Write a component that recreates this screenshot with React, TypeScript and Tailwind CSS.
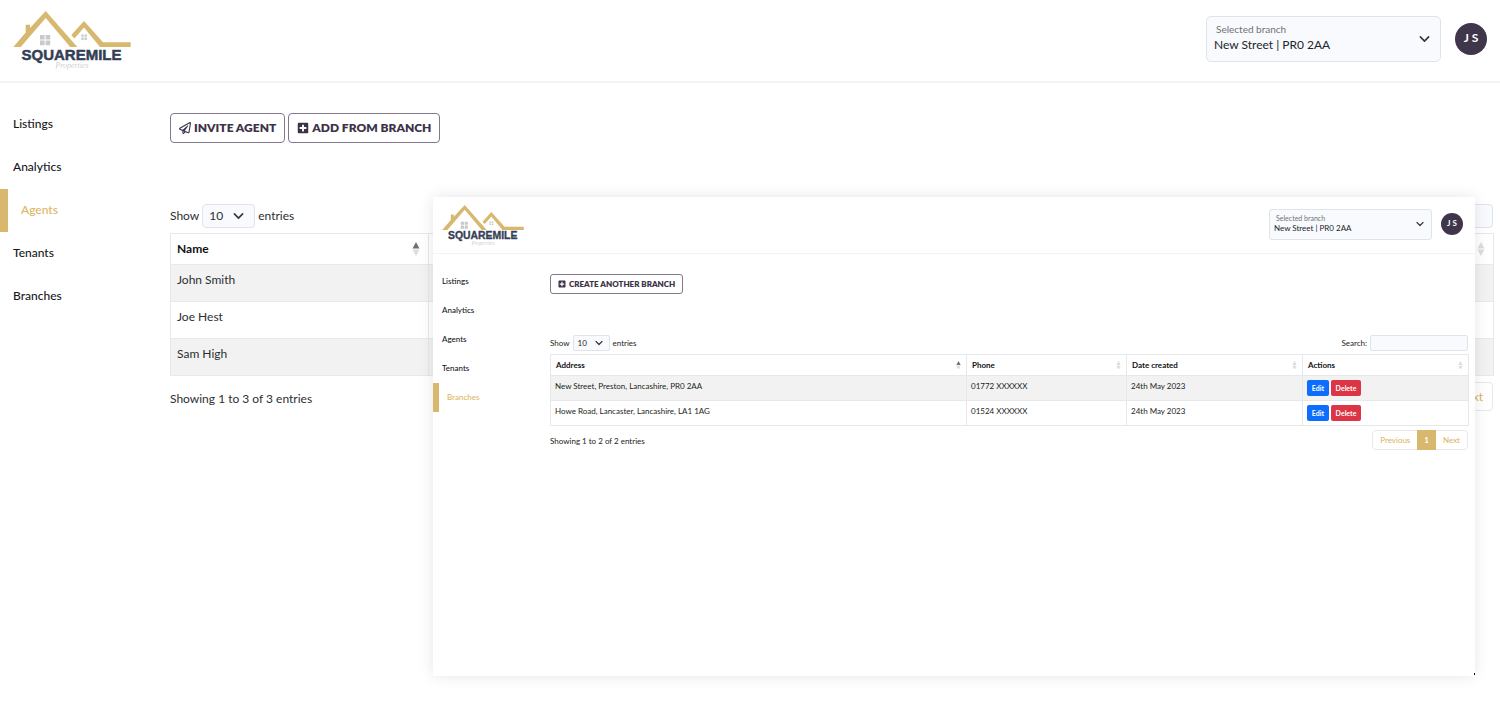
import type { ReactNode } from 'react';
import { FaPlusSquare, FaRegPaperPlane } from 'react-icons/fa';

type Size = 'lg' | 'sm';

interface Column {
  label: string;
  className: string;
  sorted?: boolean;
}

interface Branch {
  address: string;
  phone: string;
  created: string;
}

const NAV = ['Listings', 'Analytics', 'Agents', 'Tenants', 'Branches'];

const AGENTS = ['John Smith', 'Joe Hest', 'Sam High'];

const BRANCHES: Branch[] = [
  { address: 'New Street, Preston, Lancashire, PR0 2AA', phone: '01772 XXXXXX', created: '24th May 2023' },
  { address: 'Howe Road, Lancaster, Lancashire, LA1 1AG', phone: '01524 XXXXXX', created: '24th May 2023' },
];

const AGENT_COLUMNS: Column[] = [
  { label: 'Name', className: 'w-[258px]', sorted: true },
  { label: '', className: '' },
];

const BRANCH_COLUMNS: Column[] = [
  { label: 'Address', className: '', sorted: true },
  { label: 'Phone', className: 'w-[160px]' },
  { label: 'Date created', className: 'w-[176px]' },
  { label: 'Actions', className: 'w-[166px]' },
];

const STYLES = {
  lg: {
    text: 'text-[12px] leading-[18px]',
    header: 'h-[83px] border-b-2 pl-[13px] pr-[13px] pb-1',
    logoLink: 'pt-1',
    logo: 'w-[118px]',
    branchBox: 'w-[235px] h-[46px] rounded-[5px] pt-[5px]',
    branchLabel: 'pl-[9px] text-[10px] leading-[15px]',
    branchSelect: 'pl-[7px] text-[12px] leading-[16px]',
    branchChevron: 'right-[10px] w-[11px]',
    avatar: 'w-8 h-8 text-[12px] ml-[14px] pb-[2px]',
    nav: 'w-[170px] pt-5',
    navItem: 'h-[43px] pl-[13px] pb-[2px]',
    navActive: 'h-[43px] pl-[13px] pb-[2px] border-l-8',
    main: 'pt-[30px] pr-[6px]',
    button: 'h-[30px] rounded-[4px] px-[8px] gap-[3px] text-[12px]',
    actions: 'gap-[3px] mb-[61px]',
    controls: 'gap-[3px] h-6 mb-[5px] pr-[1px]',
    lengthSelect: 'w-[53px] h-6 pl-[6px] rounded-[4px]',
    lengthChevron: 'right-[11px] w-[11px]',
    search: 'w-[146px] h-6 rounded-[4px]',
    headCell: 'h-[31px] pl-[6px] pr-[8px]',
    cell: 'h-[37px] px-[6px] pt-[6px]',
    sort: 'w-[8px]',
    footer: 'mt-[6px] pr-[1px]',
    info: 'pt-1',
    page: 'h-[27px] px-[9px]',
  },
  sm: {
    text: 'text-[8px] leading-[12px]',
    header: 'h-[57px] border-b pl-[9px] pr-[12px] pb-[2px]',
    logoLink: 'pt-1',
    logo: 'w-[82px]',
    branchBox: 'w-[163px] h-[31px] rounded-[3px] pt-[3px]',
    branchLabel: 'pl-[6px] text-[7px] leading-[10px]',
    branchSelect: 'pl-[4px] text-[8px] leading-[11px]',
    branchChevron: 'right-[7px] w-[8px]',
    avatar: 'w-[22px] h-[22px] text-[8px] ml-[9px] pb-[2px]',
    nav: 'w-[117px] pt-[13px]',
    navItem: 'h-[29px] pl-[9px] pb-[2px]',
    navActive: 'h-[29px] pl-[8px] pb-[2px] border-l-6',
    main: 'pt-5 pr-[6px]',
    button: 'h-5 rounded-[3px] px-[7px] gap-[3px] text-[8px]',
    actions: 'gap-[3px] mb-[41px]',
    controls: 'gap-[3px] h-4 mb-[3px] pr-[1px]',
    lengthSelect: 'w-[37px] h-4 pl-[4px] rounded-[2px]',
    lengthChevron: 'right-[7px] w-[8px]',
    search: 'w-[98px] h-4 rounded-[2px]',
    headCell: 'h-[21px] px-[5px]',
    cell: 'h-[25px] px-[4px] pt-[4px]',
    sort: 'w-[5px]',
    footer: 'mt-[4px] pr-[1px]',
    info: 'pt-[2px]',
    page: 'h-[18px] px-[7px]',
  },
};

function Logo({ className }: { className: string }) {
  return (
    <svg viewBox="0 0 118 60" className={className} role="img" aria-label="Squaremile Properties">
      <g fill="#d8b86e">
        <path d="M0.3 36 L12.7 21.6 V13.7 H17 V17 L32.7 0 L64.3 36 H57.2 L32.7 7 L7.7 36 Z" />
        <path d="M58.3 24 L71 10 L90 31.3 H117.7 V36 H87 L71 16.4 L61.4 27.4 Z" />
      </g>
      <g fill="#c9c9cc">
        <path d="M27 24h4.6v4.6H27zM32.6 24h4.6v4.6h-4.6zM27 29.6h4.6v4.6H27zM32.6 29.6h4.6v4.6h-4.6z" />
        <path d="M68.4 23.4h2.3v2.3h-2.3zM71.6 23.4h2.3v2.3h-2.3zM68.4 26.6h2.3v2.3h-2.3zM71.6 26.6h2.3v2.3h-2.3z" />
      </g>
      <text
        x="58.5"
        y="49"
        textAnchor="middle"
        className="font-['Liberation_Sans'] text-[15px] font-bold"
        fill="#343f57"
        stroke="#343f57"
        strokeWidth="0.5"
      >
        SQUAREMILE
      </text>
      <text x="59" y="57" textAnchor="middle" className="font-['Liberation_Serif'] text-[8px] italic" fill="#d0d0d4">
        Properties
      </text>
    </svg>
  );
}

function Chevron({ className }: { className: string }) {
  return (
    <svg
      viewBox="0 0 16 16"
      className={`absolute top-1/2 -translate-y-1/2 pointer-events-none ${className}`}
      fill="none"
      stroke="#343a40"
      strokeWidth="2.4"
      strokeLinecap="round"
      strokeLinejoin="round"
    >
      <path d="M2 5l6 6 6-6" />
    </svg>
  );
}

function SortIcon({ sorted, className }: { sorted?: boolean; className: string }) {
  return (
    <svg viewBox="0 0 8 14" className={`shrink-0 ${className}`}>
      <path d="M4 0L7.5 6.5H0.5Z" fill={sorted ? '#6f7173' : '#dcdddf'} />
      <path d="M4 14L7.5 7.5H0.5Z" fill="#dcdddf" />
    </svg>
  );
}

function OutlineButton({ size, icon, children }: { size: Size; icon: ReactNode; children: ReactNode }) {
  return (
    <button
      className={`flex items-center border border-[#81798b] bg-white font-extrabold text-[#3d3349] whitespace-nowrap ${STYLES[size].button}`}
    >
      {icon}
      {children}
    </button>
  );
}

function Header({ size }: { size: Size }) {
  const s = STYLES[size];
  return (
    <header className={`flex items-center border-[#f3f3f3] ${s.header}`}>
      <a href="#" className={`mr-auto ${s.logoLink}`}>
        <Logo className={s.logo} />
      </a>
      <div className={`relative border border-[#dfe3ea] bg-[#f8fafe] ${s.branchBox}`}>
        <label htmlFor={`branch-${size}`} className={`block text-[#6e7277] ${s.branchLabel}`}>
          Selected branch
        </label>
        <select
          id={`branch-${size}`}
          className={`block w-full appearance-none bg-transparent text-[#212529] ${s.branchSelect}`}
        >
          <option>New Street | PR0 2AA</option>
        </select>
        <Chevron className={s.branchChevron} />
      </div>
      <button
        className={`flex items-center justify-center rounded-full bg-[#40364b] font-bold text-white ${s.avatar}`}
      >
        J S
      </button>
    </header>
  );
}

function Sidebar({ size, active }: { size: Size; active: string }) {
  const s = STYLES[size];
  return (
    <nav className={`shrink-0 ${s.nav}`}>
      {NAV.map((item) => (
        <a
          key={item}
          href="#"
          className={`flex items-center font-medium ${
            item === active ? `border-[#d8b86e] text-[#dcb765] ${s.navActive}` : `text-[#16181b] ${s.navItem}`
          }`}
        >
          {item}
        </a>
      ))}
    </nav>
  );
}

function DataTable({
  size,
  columns,
  info,
  searchLabel,
  children,
}: {
  size: Size;
  columns: Column[];
  info: string;
  searchLabel?: string;
  children: ReactNode;
}) {
  const s = STYLES[size];
  return (
    <>
      <div className={`flex items-center ${s.controls}`}>
        <label htmlFor={`length-${size}`}>Show</label>
        <div className="relative">
          <select
            id={`length-${size}`}
            className={`block appearance-none border border-[#dfe3ea] bg-[#f8fafe] ${s.lengthSelect}`}
          >
            <option>10</option>
          </select>
          <Chevron className={s.lengthChevron} />
        </div>
        <span>entries</span>
        <label htmlFor={`search-${size}`} className="ml-auto">
          {searchLabel}
        </label>
        <input
          id={`search-${size}`}
          type="search"
          aria-label="Search"
          className={`border border-[#dfe3ea] bg-[#f8fafe] ${s.search}`}
        />
      </div>

      <table className="w-full table-fixed border-collapse border border-[#e6e8eb]">
        <thead>
          <tr>
            {columns.map((col, i) => (
              <th key={i} className={`border border-[#e6e8eb] text-left font-bold text-[#101214] ${s.headCell} ${col.className}`}>
                <div className="flex items-center justify-between">
                  <span>{col.label}</span>
                  <SortIcon sorted={col.sorted} className={s.sort} />
                </div>
              </th>
            ))}
          </tr>
        </thead>
        <tbody>{children}</tbody>
      </table>

      <div className={`flex items-center justify-between ${s.footer}`}>
        <p className={s.info}>{info}</p>
        <div className="flex rounded-[4px] border border-[#e6e8eb] text-[#d8b25c]">
          <button className={s.page}>Previous</button>
          <button className={`-my-px box-content border-y border-[#d8b86e] bg-[#d8b86e] font-bold text-white ${s.page}`}>1</button>
          <button className={s.page}>Next</button>
        </div>
      </div>
    </>
  );
}

function Cell({ size, children }: { size: Size; children?: ReactNode }) {
  return <td className={`border border-[#e6e8eb] align-top ${STYLES[size].cell}`}>{children}</td>;
}

function AgentsPage() {
  const s = STYLES.lg;
  return (
    <div className={`text-[#2b2f33] ${s.text}`}>
      <Header size="lg" />
      <div className="flex">
        <Sidebar size="lg" active="Agents" />
        <main className={`flex-1 ${s.main}`}>
          <div className={`flex ${s.actions}`}>
            <OutlineButton size="lg" icon={<FaRegPaperPlane />}>INVITE AGENT</OutlineButton>
            <OutlineButton size="lg" icon={<FaPlusSquare />}>ADD FROM BRANCH</OutlineButton>
          </div>
          <DataTable size="lg" columns={AGENT_COLUMNS} info="Showing 1 to 3 of 3 entries">
            {AGENTS.map((name) => (
              <tr key={name} className="odd:bg-[#f2f2f2]">
                <Cell size="lg">{name}</Cell>
                <Cell size="lg" />
              </tr>
            ))}
          </DataTable>
        </main>
      </div>
    </div>
  );
}

function BranchesWindow() {
  const s = STYLES.sm;
  return (
    <section
      className={`absolute top-[197px] left-[433px] right-[25px] h-[479px] bg-white text-[#1b1e21] shadow-[0_0_14px_rgba(0,0,0,0.1)] ${s.text}`}
    >
      <Header size="sm" />
      <div className="flex">
        <Sidebar size="sm" active="Branches" />
        <main className={`flex-1 ${s.main}`}>
          <div className={`flex ${s.actions}`}>
            <OutlineButton size="sm" icon={<FaPlusSquare />}>CREATE ANOTHER BRANCH</OutlineButton>
          </div>
          <DataTable size="sm" columns={BRANCH_COLUMNS} info="Showing 1 to 2 of 2 entries" searchLabel="Search:">
            {BRANCHES.map((branch) => (
              <tr key={branch.address} className="odd:bg-[#f2f2f2]">
                <Cell size="sm">{branch.address}</Cell>
                <Cell size="sm">{branch.phone}</Cell>
                <Cell size="sm">{branch.created}</Cell>
                <Cell size="sm">
                  <div className="flex gap-[2px] text-[7px] font-bold text-white">
                    <button className="h-4 w-[22px] rounded-[2px] bg-[#0d6efd]">Edit</button>
                    <button className="h-4 w-[30px] rounded-[2px] bg-[#dc3545]">Delete</button>
                  </div>
                </Cell>
              </tr>
            ))}
          </DataTable>
        </main>
      </div>
      {/* Resize corner */}
      <span className="absolute bottom-[1px] right-0 h-[2px] w-px bg-black" />
    </section>
  );
}

export default function App() {
  return (
    <div className="relative min-h-screen overflow-hidden bg-white font-['Lato','Open_Sans',sans-serif]">
      <AgentsPage />
      <BranchesWindow />
    </div>
  );
}
